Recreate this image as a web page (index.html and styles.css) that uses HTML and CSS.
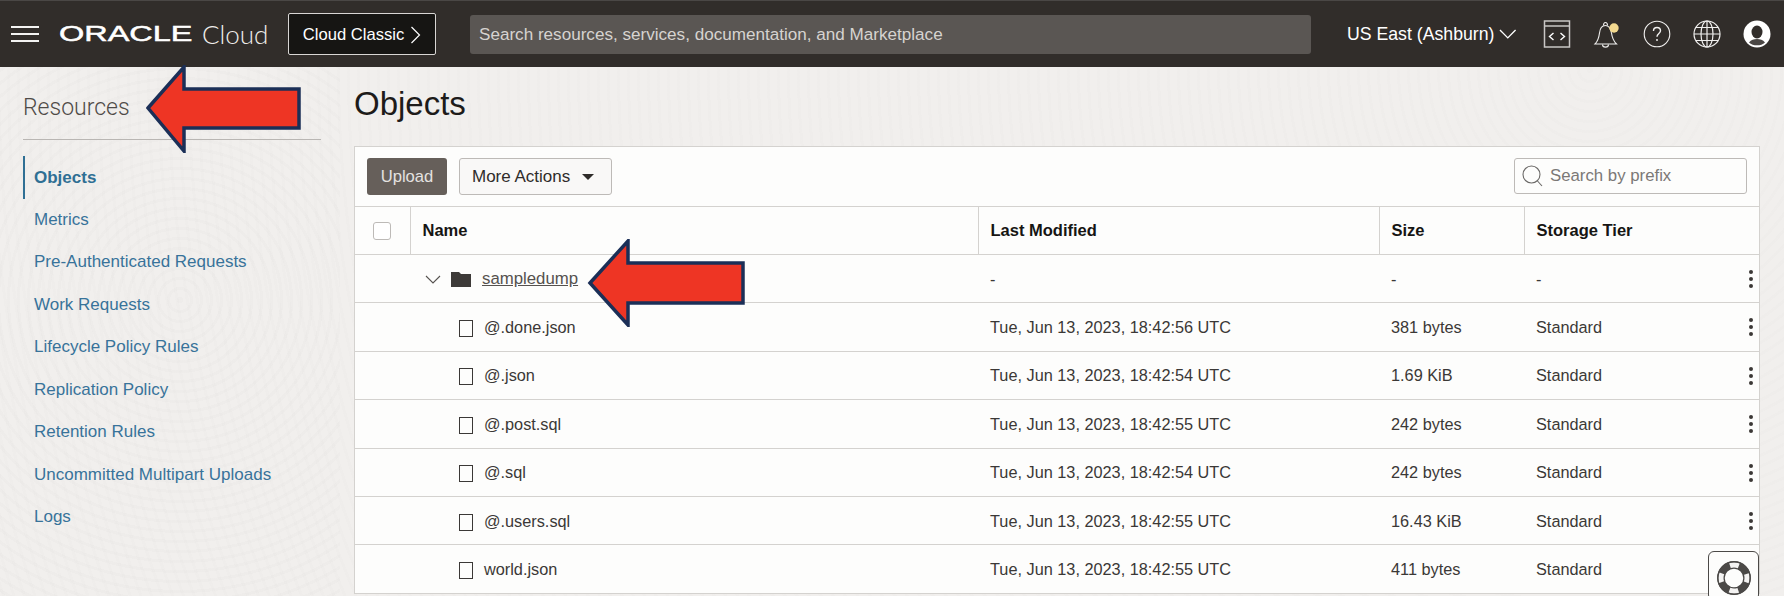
FILE: index.html
```html
<!DOCTYPE html>
<html lang="en">
<head>
<meta charset="UTF-8">
<title>Objects - Oracle Cloud</title>
<link rel="stylesheet" href="styles.css">
</head>
<body>

<header class="topbar">
    <div class="menu-icon"><span></span><span></span><span></span></div>
    <div class="brand"><span class="brand-oracle">ORACLE</span><span class="brand-cloud">Cloud</span></div>
    <div class="classic-btn">Cloud Classic
        <svg width="11" height="20" viewBox="0 0 11 20"><path d="M1.500 2l8 8-8 8" fill="none" stroke="#fff" stroke-width="1.200"/></svg>
    </div>
    <div class="global-search">Search resources, services, documentation, and Marketplace</div>
    <div class="region">US East (Ashburn)
        <svg width="18" height="10" viewBox="0 0 18 10"><path d="M1 1l8 8 8-8" fill="none" stroke="#fff" stroke-width="1.400"/></svg>
    </div>
    <div class="top-icons">
        <svg width="28" height="28" viewBox="0 0 28 28" fill="none" stroke="#c9c7c5">
            <rect x="1.500" y="1" width="25" height="26" stroke-width="1.500"/>
            <path d="M1.500 6h25" stroke-width="1.500"/>
            <path d="M10.500 13l-4 3.500 4 3.500M17.500 13l4 3.500-4 3.500" stroke="#fff" stroke-width="1.400"/>
        </svg>
        <svg width="28" height="28" viewBox="0 0 28 28" fill="none" stroke="#f0efee" stroke-width="1.100">
            <path d="M2 24c3-3 4-7 4.500-11 .5-5 3-7.500 6-7.500s5 2.500 6 7.500c.5 4 2 8 5 11z"/>
            <path d="M10.500 5.500c0-4 4-4 4 0M9.500 24.500c0 3.500 6 3.500 6 0"/>
            <circle cx="21" cy="8" r="4.700" fill="#f3d98f" stroke="none"/>
        </svg>
        <svg width="28" height="28" viewBox="0 0 28 28" fill="none" stroke="#f0efee" stroke-width="1.100">
            <circle cx="14" cy="14" r="12.800"/>
            <path d="M10.500 11c0-2 1.500-3.500 3.500-3.500s3.500 1.500 3.500 3.300c0 2.700-3.500 2.700-3.500 6" stroke-width="1.400"/>
            <circle cx="14" cy="20" r=".9" fill="#fff" stroke="none"/>
        </svg>
        <svg width="28" height="28" viewBox="0 0 28 28" fill="none" stroke="#f0efee" stroke-width="1.200">
            <circle cx="14" cy="14" r="13"/>
            <ellipse cx="14" cy="14" rx="6" ry="13"/>
            <path d="M14 1v26M1 14h26M3 7.500h22M3 20.500h22"/>
        </svg>
        <svg width="28" height="28" viewBox="0 0 28 28">
            <circle cx="14" cy="14" r="13.500" fill="#fff"/>
            <ellipse cx="14" cy="12" rx="5.500" ry="6.500" fill="#312d2a"/>
            <path d="M6 22.500c2-3 5-3.500 8-3.500s6 .5 8 3.500c-2 2-5 2.800-8 2.800s-6-.8-8-2.800z" fill="#4a4644"/>
        </svg>
    </div>
</header>

<div class="layout">
    <aside class="sidebar">
        <h3 class="side-title">Resources</h3>
        <ul class="side-nav">
            <li class="active">Objects</li>
            <li>Metrics</li>
            <li>Pre-Authenticated Requests</li>
            <li>Work Requests</li>
            <li>Lifecycle Policy Rules</li>
            <li>Replication Policy</li>
            <li>Retention Rules</li>
            <li>Uncommitted Multipart Uploads</li>
            <li>Logs</li>
        </ul>
    </aside>

    <main class="content">
        <h1 class="page-title">Objects</h1>
        <section class="card">
            <div class="toolbar">
                <button class="btn btn-primary">Upload</button>
                <button class="btn btn-actions">More Actions <span class="caret"></span></button>
                <div class="prefix-search">
                    <svg width="21" height="22" viewBox="0 0 21 22" fill="none" stroke="#6b6967" stroke-width="1.100"><circle cx="9.500" cy="9.500" r="8.500"/><path d="M15.500 16l4.500 5"/></svg>
                    Search by prefix
                </div>
            </div>
            <table class="objects">
                <colgroup>
                    <col class="col-check"><col class="col-name"><col class="col-date"><col class="col-size"><col class="col-tier">
                </colgroup>
                <thead>
                    <tr>
                        <th class="check-cell"><span class="checkbox"></span></th>
                        <th>Name</th>
                        <th>Last Modified</th>
                        <th>Size</th>
                        <th>Storage Tier</th>
                    </tr>
                </thead>
                <tbody>
                    <tr>
                        <td></td>
                        <td>
                            <div class="folder-cell">
                                <svg class="chevron" width="16" height="9" viewBox="0 0 16 9"><path d="M1 1l7 7 7-7" fill="none" stroke="#56524f" stroke-width="1.100"/></svg>
                                <svg class="folder" width="20" height="16" viewBox="0 0 20 16"><path d="M0 1h8l2 2h10v13H0z" fill="#3d3a38"/></svg>
                                <a class="folder-link">sampledump</a>
                            </div>
                        </td>
                        <td>-</td>
                        <td>-</td>
                        <td class="tier-cell">-<span class="kebab"><i></i><i></i><i></i></span></td>
                    </tr>
                    <tr>
                        <td></td>
                        <td class="file-cell"><span class="file-icon"></span>@.done.json</td>
                        <td>Tue, Jun 13, 2023, 18:42:56 UTC</td>
                        <td>381 bytes</td>
                        <td class="tier-cell">Standard<span class="kebab"><i></i><i></i><i></i></span></td>
                    </tr>
                    <tr>
                        <td></td>
                        <td class="file-cell"><span class="file-icon"></span>@.json</td>
                        <td>Tue, Jun 13, 2023, 18:42:54 UTC</td>
                        <td>1.69 KiB</td>
                        <td class="tier-cell">Standard<span class="kebab"><i></i><i></i><i></i></span></td>
                    </tr>
                    <tr>
                        <td></td>
                        <td class="file-cell"><span class="file-icon"></span>@.post.sql</td>
                        <td>Tue, Jun 13, 2023, 18:42:55 UTC</td>
                        <td>242 bytes</td>
                        <td class="tier-cell">Standard<span class="kebab"><i></i><i></i><i></i></span></td>
                    </tr>
                    <tr>
                        <td></td>
                        <td class="file-cell"><span class="file-icon"></span>@.sql</td>
                        <td>Tue, Jun 13, 2023, 18:42:54 UTC</td>
                        <td>242 bytes</td>
                        <td class="tier-cell">Standard<span class="kebab"><i></i><i></i><i></i></span></td>
                    </tr>
                    <tr>
                        <td></td>
                        <td class="file-cell"><span class="file-icon"></span>@.users.sql</td>
                        <td>Tue, Jun 13, 2023, 18:42:55 UTC</td>
                        <td>16.43 KiB</td>
                        <td class="tier-cell">Standard<span class="kebab"><i></i><i></i><i></i></span></td>
                    </tr>
                    <tr>
                        <td></td>
                        <td class="file-cell"><span class="file-icon"></span>world.json</td>
                        <td>Tue, Jun 13, 2023, 18:42:55 UTC</td>
                        <td>411 bytes</td>
                        <td class="tier-cell">Standard</td>
                    </tr>
                </tbody>
            </table>
        </section>
    </main>
</div>

<!-- callouts drawn over the screenshot -->
<svg class="arrow arrow-resources" width="156" height="88" viewBox="0 0 156 88">
    <path d="M2 43L38 2v22h115v39H38v23z" fill="#ee3524" stroke="#1b2f57" stroke-width="3.500"/>
</svg>
<svg class="arrow arrow-folder" width="160" height="88" viewBox="0 0 160 88">
    <path d="M4 44L42 2v22h115v40H42v22z" fill="#ee3524" stroke="#1b2f57" stroke-width="3.500"/>
</svg>

<div class="help-box">
    <svg width="34" height="34" viewBox="0 0 34 34" fill="none">
        <circle cx="17" cy="17" r="13" stroke="#4b4947" stroke-width="7.500"/>
        <circle cx="17" cy="17" r="13" stroke="#f4f3f2" stroke-width="5" stroke-dasharray="9 11.420" stroke-dashoffset="4.500"/>
        <circle cx="17" cy="17" r="16.300" stroke="#4b4947" stroke-width="1.200"/>
    </svg>
</div>

</body>
</html>
```

FILE: styles.css
```css
* {
    box-sizing: border-box;
}
body {
    margin: 0;
    height: 596px;
    overflow: hidden;
    position: relative;
    font-family: "Liberation Sans", Arial, sans-serif;
    color: #2f2c2a;
    background-color: #f1efed;
    background-image:
        repeating-radial-gradient(circle at 1590px 70px, rgba(0, 0, 0, 0.008) 0 3px, transparent 3px 10px),
        repeating-radial-gradient(circle at 180px 300px, rgba(0, 0, 0, 0.01) 0 3px, transparent 3px 10px);
    background-size: 100% 100%, 340px 100%;
    background-repeat: no-repeat;
}

/* top bar */
.topbar {
    height: 67px;
    background-color: #312d2a;
    border-top: 1px solid #4a4745;
    color: #fff;
    display: flex;
    align-items: center;
}
.topbar > * {
    flex-shrink: 0;
}
.menu-icon {
    width: 28px;
    margin-left: 11px;
    display: flex;
    flex-direction: column;
    gap: 5px;
}
.menu-icon span {
    display: block;
    height: 2px;
    background-color: #f4f3f2;
}
.brand {
    width: 229px;
    margin-left: 20px;
    display: flex;
    align-items: center;
    white-space: nowrap;
}
.brand-oracle {
    display: inline-block;
    flex: none;
    width: 143px;
    font-size: 22.400px;
    -webkit-text-stroke: 0.5px #fff;
    transform: scale(1.450, 1);
    transform-origin: left center;
}
.brand-cloud {
    font-family: "Lato", sans-serif;
    font-weight: 300;
    font-size: 26px;
    color: #efedeb;
}
.classic-btn {
    width: 148px;
    height: 42px;
    padding-top: 1px;
    background-color: #161513;
    border: 1px solid #d8d6d4;
    border-radius: 2px;
    font-size: 16.600px;
    display: flex;
    align-items: center;
    justify-content: center;
    gap: 6px;
}
.global-search {
    width: 841px;
    height: 39px;
    margin-left: 34px;
    padding-left: 9px;
    background-color: #5a5653;
    border-radius: 3px;
    color: #d6d3d0;
    font-size: 17.100px;
    line-height: 39px;
}
.region {
    width: 170px;
    margin-left: 36px;
    font-size: 17.700px;
    display: flex;
    align-items: center;
    gap: 5px;
    white-space: nowrap;
}
.top-icons {
    margin-left: 26px;
    display: flex;
    align-items: center;
    gap: 22px;
}

/* page layout */
.layout {
    display: flex;
}
.sidebar {
    width: 354px;
    flex-shrink: 0;
    padding: 0 33px 0 23px;
}
.side-title {
    margin: 0;
    height: 73px;
    padding-top: 27px;
    border-bottom: 1px solid #b9b6b3;
    font-family: "Roboto", sans-serif;
    font-size: 23px;
    line-height: 28px;
    font-weight: 300;
    color: #4f4b48;
}
.side-nav {
    list-style: none;
    margin: 16px 0 0;
    padding: 0;
}
.side-nav li {
    height: 42.500px;
    padding-left: 11px;
    font-size: 17px;
    line-height: 42px;
    color: #38739a;
    white-space: nowrap;
}
.side-nav li.active {
    font-weight: bold;
    color: #2f6f94;
    border-left: 2px solid #2f6f94;
    padding-left: 9px;
    line-height: 44px;
}
.content {
    flex: 1;
    padding-right: 24px;
    min-width: 0;
}
.page-title {
    margin: 0;
    height: 79px;
    padding-top: 17px;
    font-size: 33px;
    line-height: 40px;
    font-weight: normal;
    color: #1d1b1a;
}

/* objects card */
.card {
    background-color: #fdfdfc;
    border: 1px solid #d4d2cf;
    border-bottom: none;
}
.toolbar {
    height: 59px;
    padding: 11px 12px 0;
    display: flex;
    align-items: flex-start;
    gap: 12px;
}
.btn {
    height: 37px;
    padding: 0;
    border-radius: 3px;
    font-family: inherit;
    font-size: 16.600px;
}
.btn-primary {
    width: 80px;
    border: none;
    background-color: #665f5a;
    color: #e4e2e0;
}
.btn-actions {
    width: 153px;
    padding-left: 12px;
    border: 1px solid #bdbab7;
    background-color: #f9f8f7;
    color: #2f2c2a;
    font-size: 17px;
    display: flex;
    align-items: center;
    gap: 12px;
}
.caret {
    width: 0;
    height: 0;
    border-left: 6px solid transparent;
    border-right: 6px solid transparent;
    border-top: 6px solid #2f2c2a;
}
.prefix-search {
    width: 233px;
    height: 36px;
    margin-left: auto;
    padding-left: 7px;
    border: 1px solid #bdbab7;
    border-radius: 3px;
    background-color: #fdfdfc;
    color: #7b7876;
    font-size: 16.800px;
    display: flex;
    align-items: center;
    gap: 7px;
}
.objects {
    width: 100%;
    table-layout: fixed;
    border-collapse: collapse;
    font-size: 16.300px;
}
.col-check {
    width: 55px;
}
.col-name {
    width: 568px;
}
.col-date {
    width: 401px;
}
.col-size {
    width: 145px;
}
.objects th {
    height: 48px;
    padding: 0 0 0 12px;
    border-top: 1px solid #d4d2cf;
    border-bottom: 1px solid #d4d2cf;
    border-left: 1px solid #d4d2cf;
    text-align: left;
    font-size: 16.500px;
    color: #161513;
}
.objects th.check-cell {
    border-left: none;
    padding-left: 18px;
}
.checkbox {
    display: block;
    width: 18px;
    height: 18px;
    border: 1px solid #bdbab7;
    border-radius: 3px;
    background-color: #fff;
}
.objects td {
    height: 48.400px;
    padding: 1px 0 0 12px;
    border-bottom: 1px solid #d4d2cf;
    color: #3b3836;
    white-space: nowrap;
}
.folder-cell {
    display: flex;
    align-items: center;
}
.folder-cell .chevron {
    margin-left: 3px;
}
.folder-cell .folder {
    margin-left: 10px;
}
.folder-link {
    margin-left: 11px;
    font-size: 16.800px;
    color: #55514e;
    text-decoration: underline;
}
.objects td.file-cell {
    padding-left: 49px;
}
.file-icon {
    display: inline-block;
    width: 14px;
    height: 17px;
    margin-right: 11px;
    border: 1px solid #3b3836;
    vertical-align: -4px;
}
.tier-cell {
    position: relative;
}
.kebab {
    position: absolute;
    right: 6px;
    top: 15px;
    display: flex;
    flex-direction: column;
    gap: 3px;
}
.kebab i {
    display: block;
    width: 4px;
    height: 4px;
    border-radius: 50%;
    background-color: #3b3836;
}

/* things on top of the page */
.arrow {
    position: absolute;
}
.arrow-resources {
    left: 146px;
    top: 65px;
}
.arrow-folder {
    left: 586px;
    top: 239px;
}
.help-box {
    position: absolute;
    left: 1708px;
    top: 551px;
    width: 51px;
    height: 50px;
    padding: 9px 0 0 8px;
    background-color: #fdfdfc;
    border: 1px solid #4b4947;
    border-radius: 6px;
}
```
